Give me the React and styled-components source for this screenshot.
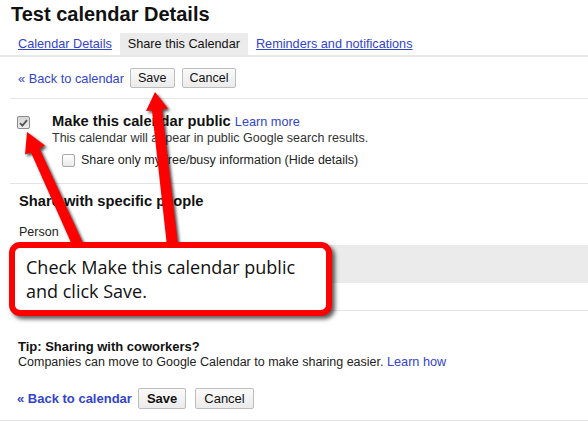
import React from "react";
import styled, { createGlobalStyle } from "styled-components";

const GlobalStyle = createGlobalStyle`
  body {
    margin: 0;
    background: #fff;
    font-family: "Liberation Sans", Arial, sans-serif;
    color: #222;
  }
`;

const LINK = "#3344cc";

const Page = styled.div`
  position: relative;
  width: 588px;
  height: 421px;
  overflow: hidden;
  background: #fff;
`;

const Title = styled.h1`
  margin: 0 0 5px;
  padding-left: 11px;
  font-size: 20px;
  line-height: 28px;
  font-weight: bold;
  color: #111;
`;

const TabBar = styled.div`
  display: flex;
  padding-left: 10px;
  border-bottom: 2px solid #e8e8e8;
`;

const Tab = styled.a`
  display: block;
  padding: 0 8px;
  height: 22px;
  line-height: 22px;
  font-size: 12.7px;
  color: ${(p) => (p.$active ? "#111" : LINK)};
  background: ${(p) => (p.$active ? "#ebebeb" : "transparent")};
  text-decoration: ${(p) => (p.$active ? "none" : "underline")};
`;

const Actions = styled.div`
  display: flex;
  align-items: center;
  gap: 6px;
  padding: ${(p) => (p.$bottom ? "18px 0 11px 17px" : "11px 0 10px 18px")};
`;

const BackLink = styled.a`
  font-size: ${(p) => (p.$bold ? "13px" : "12.8px")};
  font-weight: ${(p) => (p.$bold ? "bold" : "normal")};
  color: ${LINK};
  text-decoration: none;
`;

const Button = styled.button`
  height: ${(p) => (p.$big ? "21px" : "20px")};
  padding: 0 ${(p) => (p.$big ? 8 : 7)}px;
  margin-left: ${(p) => p.$push || 0}px;
  border: 1px solid #bdbdbd;
  border-radius: 2px;
  background: linear-gradient(#fafafa, #ebebeb);
  font-family: "Liberation Sans", Arial, sans-serif;
  font-size: ${(p) => (p.$big ? "13px" : "12.5px")};
  font-weight: ${(p) => (p.$bold ? "bold" : "normal")};
  color: #111;
`;

const Divider = styled.div`
  height: 1px;
  background: #e5e5e5;
  margin-left: ${(p) => (p.$full ? 0 : 10)}px;
`;

const PublicSection = styled.div`
  display: grid;
  grid-template-columns: 35px 1fr;
  padding: 14px 0 14px 17px;
`;

const Box = styled.span`
  display: inline-flex;
  align-items: center;
  justify-content: center;
  box-sizing: border-box;
  width: 13px;
  height: 13px;
  margin-top: ${(p) => p.$top || 0}px;
  border: 1px solid ${(p) => (p.$checked ? "#8d8d8d" : "#a9a9a9")};
  border-radius: 2px;
  background: ${(p) =>
    p.$checked
      ? "linear-gradient(#d6d6d6, #eeeeee)"
      : "linear-gradient(#ffffff, #e9e9e9)"};
`;

const Checkbox = ({ checked, top }) => (
  <Box $checked={checked} $top={top}>
    {checked && (
      <svg width="9" height="8" viewBox="0 0 9 8">
        <path d="M1 4.2 L3.4 6.6 L8 1.2" fill="none" stroke="#555" strokeWidth="1.8" />
      </svg>
    )}
  </Box>
);

const PublicHeading = styled.div`
  font-size: 14.7px;
  line-height: 17px;
  color: #111;
  b {
    font-weight: bold;
  }
`;

const SmallLink = styled.a`
  font-size: 12.7px;
  color: ${LINK};
  text-decoration: none;
  font-weight: normal;
`;

const Desc = styled.div`
  font-size: 12.5px;
  line-height: 15px;
  color: #333;
`;

const SubRow = styled.label`
  display: flex;
  align-items: center;
  gap: 6px;
  margin: 5px 0 0 10px;
  font-size: 12.5px;
  line-height: 18px;
  color: #222;
`;

const ShareSection = styled.div`
  padding-top: 8px;
`;

const SectionHeading = styled.div`
  padding-left: 19px;
  font-size: 14.7px;
  line-height: 18px;
  font-weight: bold;
  color: #111;
`;

const FieldLabel = styled.div`
  padding-left: 19px;
  margin-top: 15px;
  font-size: 12.5px;
  line-height: 15px;
  color: #222;
`;

const PersonRow = styled.div`
  height: 38px;
  margin: 5px 0 0 10px;
  background: #ebebeb;
`;

const EmptyRow = styled.div`
  height: 27px;
`;

const Tip = styled.div`
  padding: 28px 0 0 18px;
`;

const TipTitle = styled.div`
  font-size: 13px;
  line-height: 16px;
  font-weight: bold;
  color: #111;
`;

const TipText = styled.div`
  font-size: 12.5px;
  line-height: 15px;
  color: #222;
`;

const Callout = styled.div`
  position: absolute;
  left: 9px;
  top: 242px;
  width: 323px;
  height: 74px;
  box-sizing: border-box;
  padding: 7px 0 0 11px;
  border: 6px solid #ff0000;
  border-radius: 11px;
  background: #fff;
  box-shadow: 3px 3px 4px rgba(0, 0, 0, 0.65);
  font-family: "Open Sans", "Noto Sans", sans-serif;
  font-size: 18px;
  line-height: 24px;
  color: #111;
`;

const ArrowLayer = styled.svg`
  position: absolute;
  left: 0;
  top: 0;
  pointer-events: none;
  filter: drop-shadow(2px 2px 1.5px rgba(0, 0, 0, 0.7));
`;

export default function App() {
  return (
    <Page>
      <GlobalStyle />
      <Title>Test calendar Details</Title>
      <TabBar>
        <Tab>Calendar Details</Tab>
        <Tab $active>Share this Calendar</Tab>
        <Tab>Reminders and notifications</Tab>
      </TabBar>

      <Actions>
        <BackLink>« Back to calendar</BackLink>
        <Button>Save</Button>
        <Button $push={1}>Cancel</Button>
      </Actions>
      <Divider />

      <PublicSection>
        <Checkbox checked top={3} />
        <div>
          <PublicHeading>
            <b>Make this calendar public</b> <SmallLink>Learn more</SmallLink>
          </PublicHeading>
          <Desc>This calendar will appear in public Google search results.</Desc>
          <SubRow>
            <Checkbox />
            Share only my free/busy information (Hide details)
          </SubRow>
        </div>
      </PublicSection>
      <Divider />

      <ShareSection>
        <SectionHeading>Share with specific people</SectionHeading>
        <FieldLabel>Person</FieldLabel>
        <PersonRow />
        <EmptyRow />
      </ShareSection>
      <Divider />

      <Tip>
        <TipTitle>Tip: Sharing with coworkers?</TipTitle>
        <TipText>
          Companies can move to Google Calendar to make sharing easier.{" "}
          <SmallLink>Learn how</SmallLink>
        </TipText>
      </Tip>

      <Actions $bottom>
        <BackLink $bold>« Back to calendar</BackLink>
        <Button $big $bold>Save</Button>
        <Button $big $push={3}>Cancel</Button>
      </Actions>
      <Divider $full />

      <ArrowLayer width="588" height="421" viewBox="0 0 588 421">
        <polygon
          fill="#ff0000"
          points="27,132 45,145.5 39.5,148.5 83,243 73,247 31,152.5 25,154.5"
        />
        <polygon
          fill="#ff0000"
          points="155,92 168,108.5 162,109.5 178,245 167,246 152,110.5 146,111"
        />
      </ArrowLayer>

      <Callout>
        Check Make this calendar public
        <br />
        and click Save.
      </Callout>
    </Page>
  );
}
